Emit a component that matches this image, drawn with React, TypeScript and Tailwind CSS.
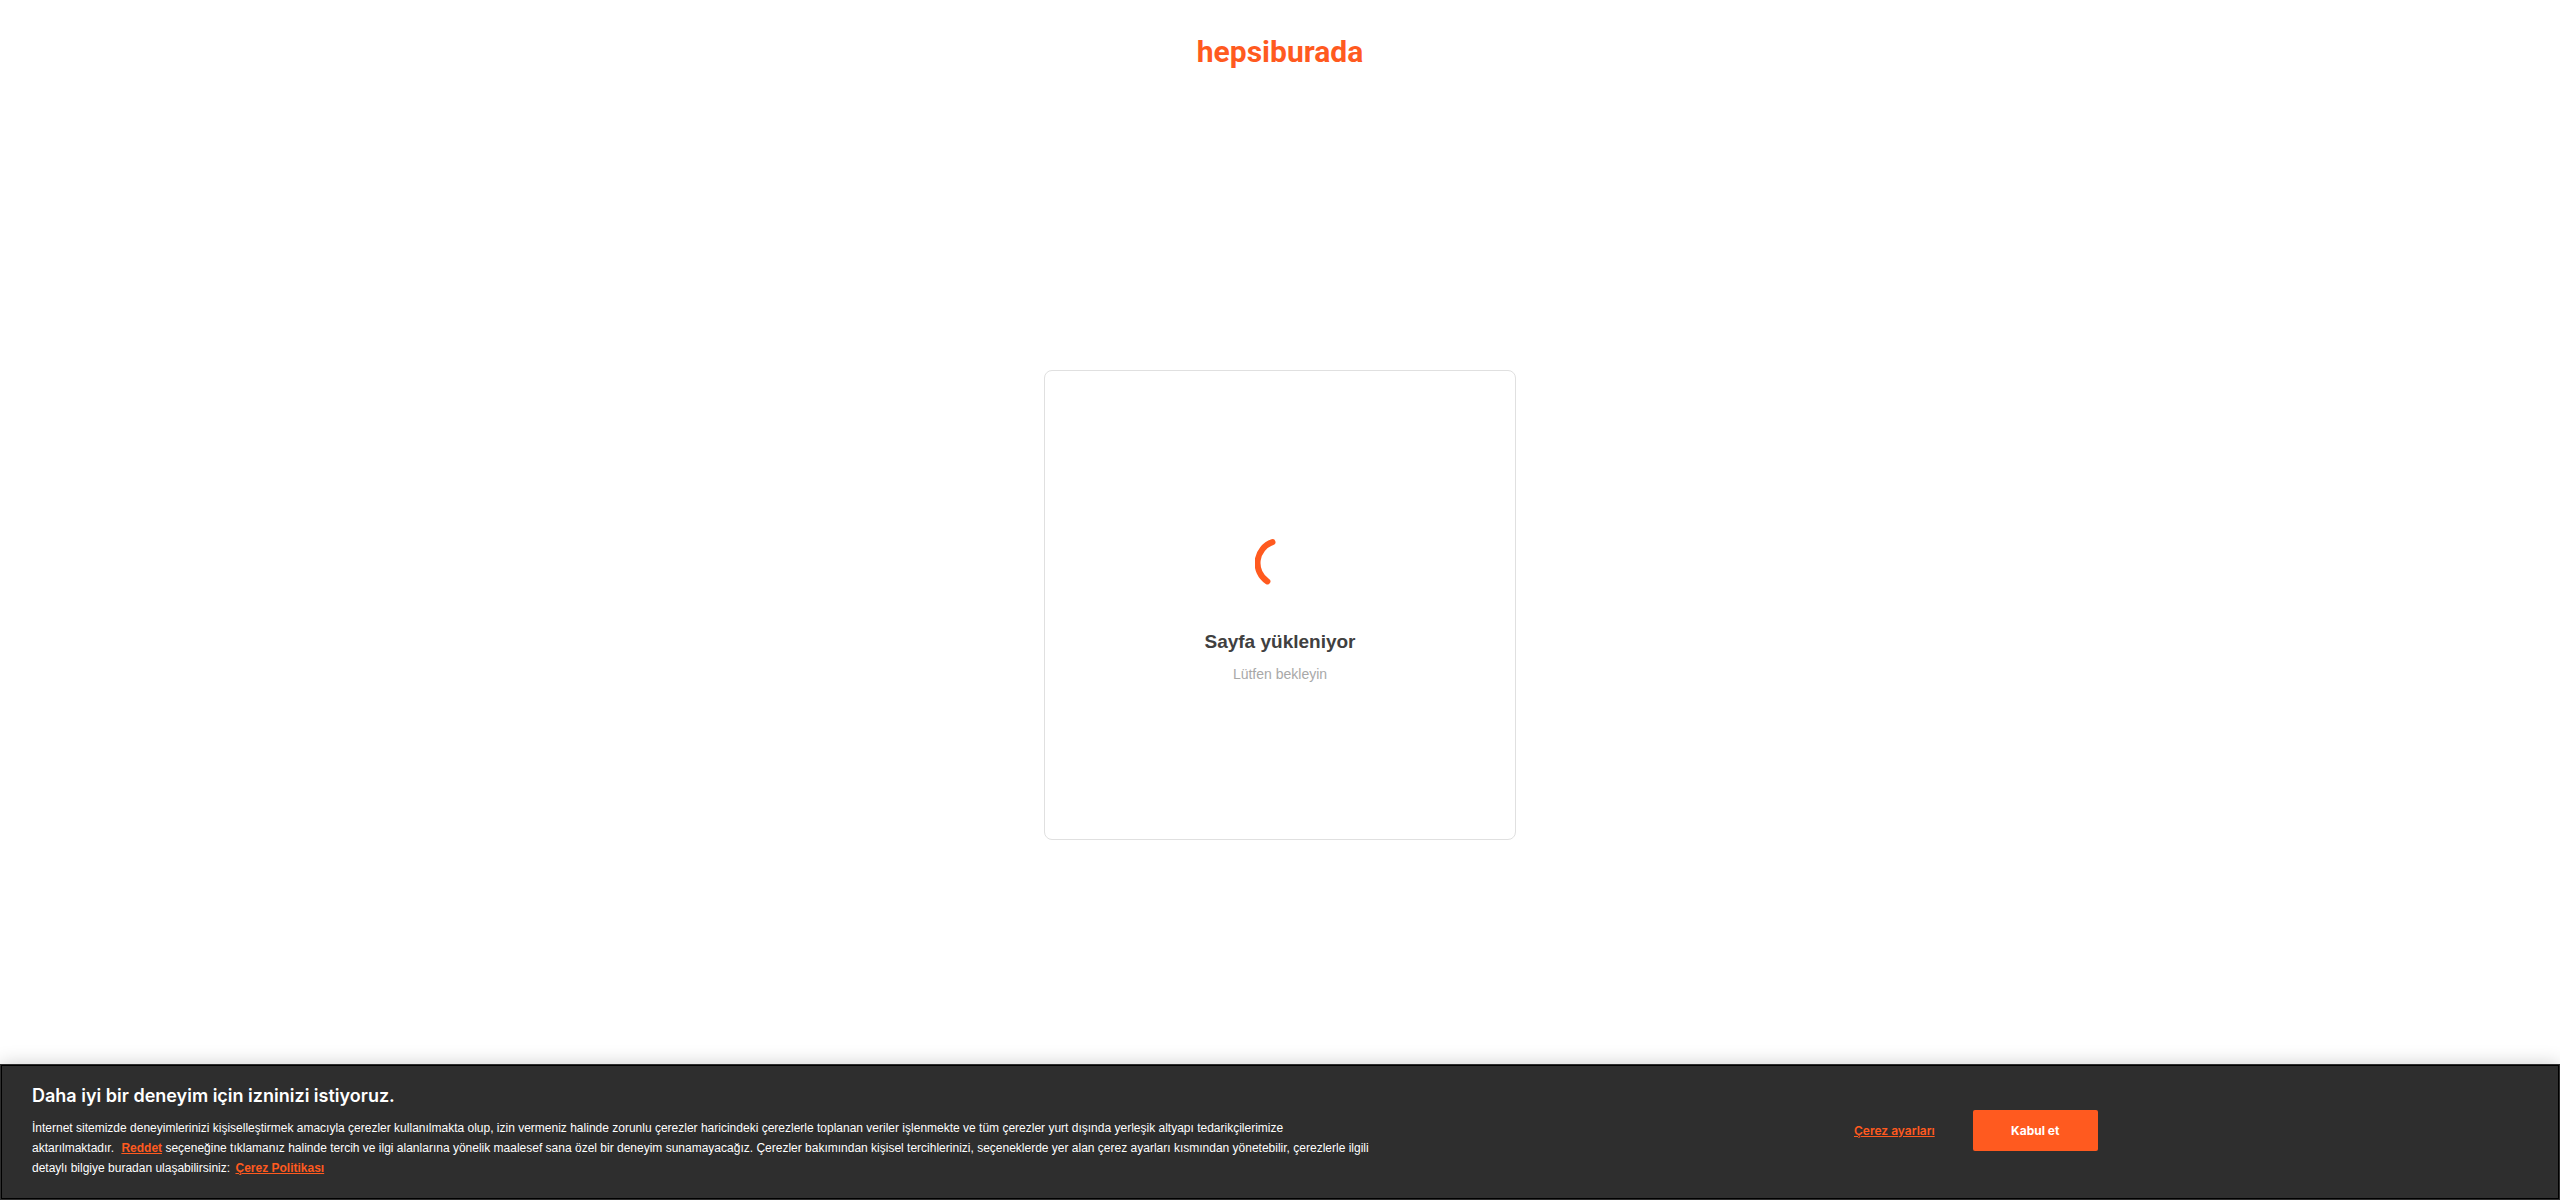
function Spinner() {
  return (
    <svg width="50" height="50" viewBox="0 0 50 50" role="img" aria-label="Yükleniyor">
      <path
        d="M17.5 4.2 A22 22 0 0 0 12.4 43.4"
        fill="none"
        stroke="#ff5a1f"
        strokeWidth="6"
        strokeLinecap="round"
      />
    </svg>
  );
}

function LoadingCard() {
  return (
    <section className="flex h-[470px] w-[472px] flex-col items-center rounded-lg border border-[#e0e0e0] pt-[167px] text-center">
      <Spinner />
      <h1 className="mt-10 text-[19px] leading-7 font-bold text-[#404040]">Sayfa yükleniyor</h1>
      <p className="mt-2 text-sm leading-5 text-[#a8a8a8]">Lütfen bekleyin</p>
    </section>
  );
}

function CookieBanner() {
  return (
    <aside className="relative flex items-start bg-[#2e2e2e] px-8 pt-[18px] pb-[22px] text-white shadow-[0_0_18px_rgba(0,0,0,0.2)] outline outline-black -outline-offset-2">
      <div className="w-[1352px] max-w-full">
        <h2 className="font-['Inter',sans-serif] text-lg leading-7 font-semibold">
          Daha iyi bir deneyim için izninizi istiyoruz.
        </h2>
        <p className="mt-2 text-xs leading-5">
          İnternet sitemizde deneyimlerinizi kişiselleştirmek amacıyla çerezler kullanılmakta olup, izin vermeniz
          halinde zorunlu çerezler haricindeki çerezlerle toplanan veriler işlenmekte ve tüm çerezler yurt dışında
          yerleşik altyapı tedarikçilerimize
          <br />
          aktarılmaktadır.{" "}
          <a href="#reddet" className="ml-1 font-bold text-[#ff5a1f] underline">
            Reddet
          </a>{" "}
          seçeneğine tıklamanız halinde tercih ve ilgi alanlarına yönelik maalesef sana özel bir deneyim
          sunamayacağız. Çerezler bakımından kişisel tercihlerinizi, seçeneklerde yer alan çerez ayarları kısmından
          yönetebilir, çerezlerle ilgili detaylı bilgiye buradan ulaşabilirsiniz:{" "}
          <a href="#cerez-politikasi" className="ml-0.5 font-bold text-[#ff5a1f] underline">
            Çerez Politikası
          </a>
        </p>
      </div>
      <div className="mt-7 mr-[17%] ml-auto flex items-center gap-[38px] pr-1.5 font-['Inter',sans-serif] text-xs leading-[17px] font-semibold">
        <button type="button" className="text-[#ff5a1f] underline">
          Çerez ayarları
        </button>
        <button type="button" className="w-[125px] rounded-xs bg-[#ff5a1f] py-3 font-bold text-white">
          Kabul et
        </button>
      </div>
    </aside>
  );
}

export default function App() {
  return (
    <div className="flex min-h-screen flex-col bg-white font-['Liberation_Sans',Arial,sans-serif]">
      <header className="flex justify-center pt-8 pb-[74px]">
        <a href="#anasayfa" className="font-['Roboto',sans-serif] text-[30px] leading-10 font-bold text-[#ff5a1f]">
          hepsiburada
        </a>
      </header>
      <main className="flex flex-1 items-center justify-center">
        <LoadingCard />
      </main>
      <CookieBanner />
    </div>
  );
}
